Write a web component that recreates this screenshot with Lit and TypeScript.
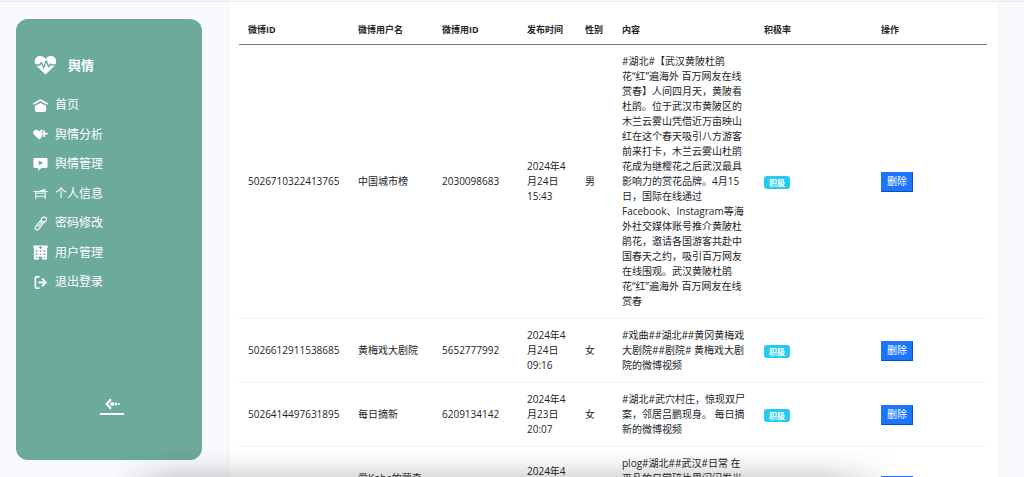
import { LitElement, html, css, svg } from "lit";
import { customElement, state } from "lit/decorators.js";

interface Post {
  id: string;
  user: string;
  uid: string;
  time: string;
  sex: string;
  text: string;
}

const POSTS: Post[] = [
  {
    id: "5026710322413765",
    user: "中国城市榜",
    uid: "2030098683",
    time: "2024年4月24日 15:43",
    sex: "男",
    text: "#湖北#【武汉黄陂杜鹃花“红”遍海外 百万网友在线赏春】人间四月天，黄陂看杜鹃。位于武汉市黄陂区的木兰云雾山凭借近万亩映山红在这个春天吸引八方游客前来打卡，木兰云雾山杜鹃花成为继樱花之后武汉最具影响力的赏花品牌。4月15日，国际在线通过Facebook、Instagram等海外社交媒体账号推介黄陂杜鹃花，邀请各国游客共赴中国春天之约，吸引百万网友在线围观。武汉黄陂杜鹃花“红”遍海外 百万网友在线赏春",
  },
  {
    id: "5026612911538685",
    user: "黄梅戏大剧院",
    uid: "5652777992",
    time: "2024年4月24日 09:16",
    sex: "女",
    text: "#戏曲##湖北##黄冈黄梅戏大剧院##剧院# 黄梅戏大剧院的微博视频",
  },
  {
    id: "5026414497631895",
    user: "每日摘新",
    uid: "6209134142",
    time: "2024年4月23日 20:07",
    sex: "女",
    text: "#湖北#武穴村庄，惊现双尸案，邻居吕鹏现身。 每日摘新的微博视频",
  },
  {
    id: "5026383514308312",
    user: "爱Kobe的蒙奇奇",
    uid: "5977512966",
    time: "2024年4月23日 18:04",
    sex: "女",
    text: "plog#湖北##武汉#日常 在平凡的日常碎片里闪闪发光 记录生活里的每一个小小瞬间和美好的微博视频",
  },
];

const ICONS = {
  home: svg`<path d="M1 6.200 8 2.200l7 4" fill="none" stroke="currentColor" stroke-width="1.700" stroke-linecap="round" stroke-linejoin="round"/><path d="M8 5.200 14 8.200v4.600q0 2-2 2H4q-2 0-2-2V8.200z"/>`,
  heartPlus: svg`<path d="M6.600 13.400 1.400 8.600C-1 6 .8 3 3.400 3c1.300 0 2.400.6 3.200 1.700C7.300 3.700 8.300 3 9.500 3c.7 0 1.300.2 1.800.5L8.200 6.700l2 2.300-.4 1.400z"/><path d="M12 3.600v7M8.600 7.100h7" fill="none" stroke="currentColor" stroke-width="1.700"/>`,
  chat: svg`<path fill-rule="evenodd" d="M1.600 1h12.800q1.100 0 1.100 1.100v8.400q0 1.100-1.100 1.100H9L5.400 15v-3.400H1.600Q.5 11.600.5 10.500V2.100Q.5 1 1.600 1zM6.200 3.600v5.200l4.800-2.600z"/>`,
  table: svg`<path d="M.5 5.800h15M3 7.600h10M3 6.500v7.500M13 6.500v7.500M3 11h10" fill="none" stroke="currentColor" stroke-width="1"/><path d="M5 5.600 10.500 4l2.500-1.400.6 1L11.500 5.600z"/>`,
  brush: svg`<path d="M3 11 8.600 4.500l3 2.300-5.200 7q-1.500 1.700-3.200.6t-.2-3.400zM5 12l4.800-6" fill="none" stroke="currentColor" stroke-width="1.200"/><path d="M8.600 4.500Q9 1.200 11.800 1.200t2.500 2.600q-.2 2.500-2.700 3" fill="none" stroke="currentColor" stroke-width="1.200"/>`,
  building: svg`<path fill-rule="evenodd" d="M.3.500h15.400v2.300H15v12.700H9.800v-3H6.200v3H1V2.800H.3zM7.400 1.200v1H6.300v1.100h1.100v1h1.200v-1h1.100V2.200H8.600v-1zM3 5.500v1.700h1.800V5.500zm4.100 0v1.700h1.800V5.500zm4.100 0v1.700H13V5.500zM3 9v1.700h1.800V9zm4.100 0v1.700h1.800V9zm4.100 0v1.700H13V9zM3 12.400v1.500h1.500v-1.500zm8.500 0v1.500H13v-1.500z"/>`,
  exit: svg`<path d="M7 2H3.700Q2.500 2 2.500 3.200v9.600q0 1.200 1.200 1.200H7" fill="none" stroke="currentColor" stroke-width="1.800"/><path d="M5.800 8h7M9.600 3.900 13.700 8l-4.100 4.100" fill="none" stroke="currentColor" stroke-width="2"/>`,
};

const MENU: { label: string; icon: keyof typeof ICONS }[] = [
  { label: "首页", icon: "home" },
  { label: "舆情分析", icon: "heartPlus" },
  { label: "舆情管理", icon: "chat" },
  { label: "个人信息", icon: "table" },
  { label: "密码修改", icon: "brush" },
  { label: "用户管理", icon: "building" },
  { label: "退出登录", icon: "exit" },
];

@customElement("side-menu")
export class SideMenu extends LitElement {
  static styles = css`
    :host {
      display: flex;
      flex-direction: column;
      box-sizing: border-box;
      padding: 36px 16px 45px;
      border-radius: 12px;
      background: #6caa9b;
      color: #fff;
    }
    .brand {
      display: flex;
      align-items: center;
      gap: 11px;
      height: 20px;
      padding-left: 2px;
      font-size: 13px;
      font-weight: 700;
      line-height: 20px;
    }
    .logo {
      width: 23px;
      height: 20px;
      display: block;
    }
    .menu {
      display: flex;
      flex-direction: column;
      justify-content: space-between;
      height: 195px;
      margin: 21px 0 0;
      padding: 0;
      list-style: none;
    }
    .link {
      display: flex;
      align-items: center;
      gap: 7px;
      height: 18px;
      padding-left: 1px;
      color: inherit;
      text-decoration: none;
      font-size: 12px;
      line-height: 18px;
    }
    .icon {
      width: 15px;
      height: 15px;
      fill: currentColor;
      flex: none;
    }
    .collapse {
      align-self: center;
      display: grid;
      place-items: center;
      width: 24px;
      height: 20px;
      margin-top: auto;
      margin-left: 6px;
      padding: 0;
      border: 0;
      border-bottom: 2px solid #fff;
      background: none;
      color: inherit;
    }
    .arrow {
      width: 15px;
      height: 12px;
      display: block;
    }
  `;

  render() {
    return html`
      <div class="brand">
        <svg class="logo" viewBox="0 0 23 20" aria-hidden="true">
          <path fill="#fff" d="M11.500 19.500 2.600 11C-.6 7.600.4 1 6.200 1c2.300 0 4.200 1.200 5.300 3 1.100-1.800 3-3 5.300-3 5.800 0 6.800 6.600 3.600 10z"/>
          <path fill="none" stroke="#6caa9b" stroke-width="1.400" stroke-linejoin="round" d="M0 10h5.600l1.800-2.500 2.300 5.200 2.500-7 2.400 6.100L16.300 9l1 1H23"/>
        </svg>
        <span>舆情</span>
      </div>
      <ul class="menu">
        ${MENU.map(
          (m) => html`<li>
            <a class="link" href="#">
              <svg class="icon" viewBox="0 0 16 16" aria-hidden="true">${ICONS[m.icon]}</svg>
              <span>${m.label}</span>
            </a>
          </li>`
        )}
      </ul>
      <button class="collapse" type="button" aria-label="收起">
        <svg class="arrow" viewBox="0 0 15 12" aria-hidden="true">
          <path fill="none" stroke="#fff" stroke-width="2" d="M6 1.200 1.600 6 6 10.800"/>
          <circle cx="7" cy="6" r="2" fill="#fff"/>
          <circle cx="10.800" cy="6" r="1.400" fill="#fff"/>
          <circle cx="13.800" cy="6" r="1" fill="#fff"/>
        </svg>
      </button>
    `;
  }
}

@customElement("post-table")
export class PostTable extends LitElement {
  @state() private posts: Post[] = POSTS;

  static styles = css`
    :host {
      display: block;
    }
    .table {
      width: 100%;
      table-layout: fixed;
      border-collapse: separate;
      border-spacing: 0;
      font-size: 10px;
      line-height: 15px;
      color: #212529;
    }
    .c-id { width: 110px; }
    .c-user { width: 84px; }
    .c-uid { width: 85px; }
    .c-time { width: 58px; }
    .c-sex { width: 37px; }
    .c-rate { width: 117px; }
    .c-act { width: 115px; }
    .head {
      padding: 9px 9px 7px;
      border-bottom: 1px solid #75787b;
      font-size: 9px;
      font-weight: 700;
      text-align: left;
      white-space: nowrap;
    }
    .cell {
      padding: 9px;
      border-bottom: 1px solid #eff1f2;
      vertical-align: middle;
    }
    .badge {
      display: block;
      width: max-content;
      margin-top: 2px;
      padding: 0 5px;
      border-radius: 3px;
      background: #25caf0;
      color: #fff;
      font-size: 8px;
      font-weight: 700;
      line-height: 13px;
    }
    .delete {
      display: block;
      box-sizing: border-box;
      height: 20px;
      padding: 0 5px;
      border: 1px outset #1a75ff;
      background: #1a75ff;
      color: #fff;
      font: inherit;
    }
  `;

  private remove(id: string) {
    this.posts = this.posts.filter((p) => p.id !== id);
  }

  render() {
    return html`
      <table class="table">
        <colgroup>
          <col class="c-id" /><col class="c-user" /><col class="c-uid" /><col class="c-time" />
          <col class="c-sex" /><col /><col class="c-rate" /><col class="c-act" />
        </colgroup>
        <thead>
          <tr>
            ${["微博ID", "微博用户名", "微博用ID", "发布时间", "性别", "内容", "积极率", "操作"].map(
              (h) => html`<th class="head" scope="col">${h}</th>`
            )}
          </tr>
        </thead>
        <tbody>
          ${this.posts.map(
            (p) => html`<tr>
              <td class="cell">${p.id}</td>
              <td class="cell">${p.user}</td>
              <td class="cell">${p.uid}</td>
              <td class="cell">${p.time}</td>
              <td class="cell">${p.sex}</td>
              <td class="cell">${p.text}</td>
              <td class="cell"><span class="badge">积极</span></td>
              <td class="cell">
                <button class="delete" type="button" @click=${() => this.remove(p.id)}>删除</button>
              </td>
            </tr>`
          )}
        </tbody>
      </table>
    `;
  }
}

@customElement("app-root")
export class AppRoot extends LitElement {
  static styles = css`
    :host {
      display: block;
      position: relative;
      height: 100vh;
      overflow: hidden;
      background: #f9fafd;
      font-family: "Open Sans", "Noto Sans CJK SC", sans-serif;
    }
    .topline {
      height: 1px;
      background: #f5f5f6;
      border-bottom: 1px solid #ebecee;
    }
    .layout {
      display: flex;
      align-items: flex-start;
      gap: 26px;
      padding: 0 25px 0 16px;
    }
    .side {
      flex: none;
      width: 186px;
      height: calc(100vh - 36px);
      margin-top: 17px;
    }
    .card {
      flex: 1;
      min-width: 0;
      padding: 11px 11px 11px 10px;
      background: #fff;
      border: solid #eff1f4;
      border-width: 0 1px;
    }
    /* soft shadow that rises from the lower edge of the window */
    .shade {
      position: absolute;
      left: 11%;
      right: 12%;
      bottom: 0;
      height: 28px;
      pointer-events: none;
      background: linear-gradient(to top, rgba(0, 0, 0, 0.14), rgba(0, 0, 0, 0.05) 45%, rgba(0, 0, 0, 0));
      mask-image: linear-gradient(to right, transparent, #000 8%, #000 90%, transparent);
    }
  `;

  render() {
    return html`
      <div class="topline"></div>
      <div class="layout">
        <side-menu class="side"></side-menu>
        <main class="card"><post-table></post-table></main>
      </div>
      <div class="shade"></div>
    `;
  }
}
